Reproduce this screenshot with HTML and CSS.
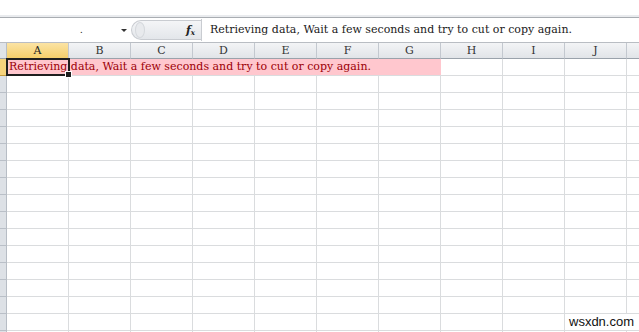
FILE: index.html
```html
<!DOCTYPE html>
<html lang="en">
<head>
<meta charset="UTF-8" />
<title>Sheet1</title>
<link rel="stylesheet" href="styles.css">
</head>
<body>

<div class="ribbon-edge"></div>

<div class="formula-bar">
  <div class="name-box"><span class="dot">.</span><span class="arrow"></span></div>
  <div class="pill"><span class="knob"></span><span class="fx">f<sub>x</sub></span></div>
  <div class="formula">Retrieving data, Wait a few seconds and try to cut or copy again.</div>
</div>

<div class="sheet" id="sheet">
  <div class="corner"></div>
  <div class="col-head active">A</div>
  <div class="col-head">B</div>
  <div class="col-head">C</div>
  <div class="col-head">D</div>
  <div class="col-head">E</div>
  <div class="col-head">F</div>
  <div class="col-head">G</div>
  <div class="col-head">H</div>
  <div class="col-head">I</div>
  <div class="col-head">J</div>
  <div class="col-head last"></div>

  <div class="row-head active"></div>
  <div class="fill">Retrieving data, Wait a few seconds and try to cut or copy again.</div>
  <div class="cell"></div>
  <div class="cell"></div>
  <div class="cell"></div>
  <div class="cell last"></div>

  <div class="selection"><span class="handle"></span></div>
</div>

<div class="watermark">wsxdn.com</div>

<script>
// empty rows 2..17
var sheet = document.getElementById("sheet");
for (var r = 2; r <= 17; r++) {
  var head = document.createElement("div");
  head.className = "row-head";
  sheet.appendChild(head);
  for (var c = 0; c < 11; c++) {
    var cell = document.createElement("div");
    cell.className = c === 10 ? "cell last" : "cell";
    sheet.appendChild(cell);
  }
}
</script>

</body>
</html>
```

FILE: styles.css
```css
body { margin: 0; width: 639px; height: 332px; overflow: hidden; background: #fff; position: relative; font-family: "DejaVu Serif", serif; }

.ribbon-edge { height: 15px; background: #fff; border-bottom: 2px solid #e9ebee; box-shadow: 0 1px 0 #a9adb2; margin-bottom: 1px; }

.formula-bar { display: flex; align-items: center; height: 24px; border-bottom: 1px solid #b9bdc3; background: #fff; }
.name-box { width: 131px; display: flex; align-items: center; justify-content: flex-end; box-sizing: border-box; padding-right: 4px; height: 100%; }
.name-box .dot { font-size: 10px; color: #333; margin-right: 38px; line-height: 1; }
.name-box .arrow { width: 0; height: 0; border-left: 3px solid transparent; border-right: 3px solid transparent; border-top: 3px solid #333; }
.pill { width: 70px; height: 20px; box-sizing: border-box; border: 1px solid #c9ccd1; border-right: none; border-radius: 10px 0 0 10px; background: linear-gradient(#f4f5f7, #e3e6ea); display: flex; align-items: center; justify-content: space-between; padding: 0 6px 0 3px; }
.pill .knob { width: 8px; height: 14px; border-radius: 50%; background: #e8eaed; border: 1px solid #d5d8dc; }
.pill .fx { font-family: "DejaVu Serif", serif; font-style: italic; font-size: 11px; color: #222; font-weight: bold; }
.pill .fx sub { font-size: 7px; vertical-align: -1px; }
.formula { flex: 1; height: 22px; border-left: 1px solid #c9ccd1; padding-left: 8px; font-size: 11px; color: #1a1a1a; line-height: 22px; white-space: nowrap; }

.sheet { display: grid; grid-template-columns: 7px repeat(10, 62px) 1fr; grid-template-rows: 16px; grid-auto-rows: 17px; position: relative; }
.corner { background: #dfe3e8; border-right: 1px solid #b7bdc5; border-bottom: 1px solid #9aa2ab; box-sizing: border-box; }
.col-head { background: linear-gradient(#f3f4f6, #e1e4e8); border-right: 1px solid #c3c8cf; border-bottom: 1px solid #9aa2ab; box-sizing: border-box; text-align: center; font-size: 11px; line-height: 15px; color: #333; }
.col-head.active { background: linear-gradient(#fbe3a4, #f5cf6b); border-bottom-color: #c29b3e; color: #222; }
.col-head.last { border-right: none; }
.row-head { background: #dde1e6; border-right: 1px solid #b7bdc5; border-bottom: 1px solid #b9bfc7; box-sizing: border-box; }
.row-head.active { background: #f6d37c; border-bottom-color: #c29b3e; }
.cell { border-right: 1px solid #dadcde; border-bottom: 1px solid #dadcde; box-sizing: border-box; }
.cell.last { border-right: none; }
.fill { grid-column: 2 / 9; background: #ffc7ce; border-bottom: 1px solid #dadcde; box-sizing: border-box; color: #9c0006; font-size: 11px; line-height: 16px; padding-left: 2px; white-space: nowrap; }

.selection { position: absolute; left: 6px; top: 15px; width: 64px; height: 18px; box-sizing: border-box; border: 2px solid #1f1f1f; }
.selection .handle { position: absolute; right: -4px; bottom: -4px; width: 5px; height: 5px; background: #1f1f1f; border: 1px solid #fff; }

.watermark { position: absolute; left: 567px; top: 314px; font-family: "Liberation Sans", Arial, sans-serif; font-size: 13px; color: #111; background: #fff; padding: 0 2px; line-height: 16px; }
```
